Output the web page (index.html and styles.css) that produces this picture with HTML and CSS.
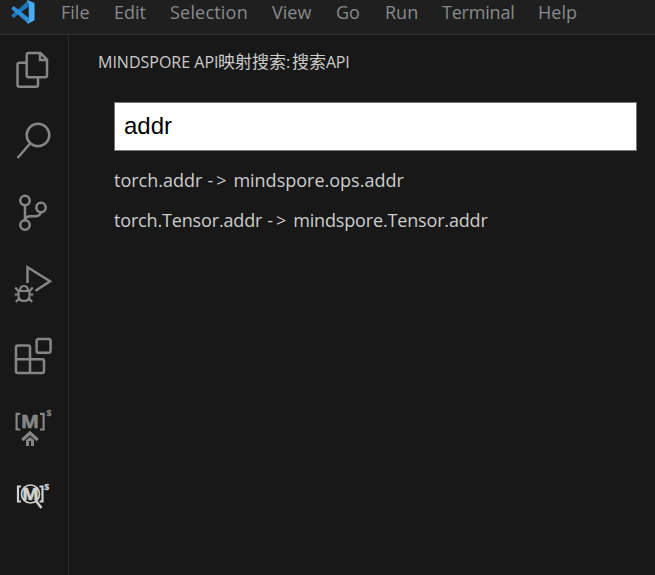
FILE: index.html
```html
<!DOCTYPE html>
<html lang="en">
<head>
<meta charset="utf-8">
<title>MindSpore API</title>
<link rel="stylesheet" href="styles.css">
</head>
<body>
<header class="titlebar">
  <svg class="logo" viewBox="0 0 24 26">
    <path fill="#1b75b8" d="M0 16.8 2.2 18.7 18 6.8V0L.2 15.7Z"/>
    <path fill="#2b8fd6" d="M0 8.2 2.2 6.3 18 18.5V25L.2 9.6Z"/>
    <path fill="#4bacf2" d="M17 .2 24 3.2V21L17.5 24.5 15.8 23.6 18 22V3L15.8 1.2Z"/>
  </svg>
  <nav class="menu">
    <span class="menu-item file">File</span>
    <span class="menu-item edit">Edit</span>
    <span class="menu-item selection">Selection</span>
    <span class="menu-item view">View</span>
    <span class="menu-item go">Go</span>
    <span class="menu-item run">Run</span>
    <span class="menu-item terminal">Terminal</span>
    <span class="menu-item help">Help</span>
  </nav>
</header>
<div class="workbench">
  <aside class="activitybar">
    <svg class="icon" viewBox="0 0 72 72"><path d="M26 26.7H19.5Q17.5 26.7 17.5 28.7V48.7Q17.5 50.7 19.5 50.7H36Q38 50.7 38 48.7V42M28.7 17H40.5L47 23.5V39.3Q47 41.3 45 41.3H28.7Q26.7 41.3 26.7 39.3V19Q26.7 17 28.7 17ZM40 17.5V24H46.5"/></svg>
    <svg class="icon" viewBox="0 0 72 72"><circle cx="38" cy="27" r="11.3"/><path d="M30.3 35.2 17.5 50"/></svg>
    <svg class="icon" viewBox="0 0 72 72"><circle cx="25" cy="20.5" r="4.7"/><circle cx="41" cy="27.5" r="4.7"/><circle cx="25" cy="45" r="4.7"/><path d="M25 25.2V40.3M41 32.2C40 35.5 38 36.3 35 36.3H30.5C27 36.3 25.5 37.5 25 40.3"/></svg>
    <svg class="icon" viewBox="0 0 72 72"><path d="M27.5 31V15.2L50 29.3 35.5 38.8"/><path class="fine" d="M18.5 39H29.5V43.5Q29.5 49 24 49T18.5 43.5ZM20 39Q20 34 24 34T28 39M18.5 39 15.2 35.5M29.5 39 32.8 35.5M18.5 42.5H14.7M29.5 42.5H33.3M19.5 46 15.7 50M28.5 46 32.3 50"/></svg>
    <svg class="icon" viewBox="0 0 72 72"><rect x="36.6" y="15" width="14" height="13.8" rx="2"/><path d="M18 21.5H28Q30 21.5 30 23.5V35.2H42Q44 35.2 44 37.2V47Q44 49 42 49H18Q16 49 16 47V23.5Q16 21.5 18 21.5ZM16 35.2H30V49"/></svg>
    <svg class="icon" viewBox="0 0 72 72"><path class="bracket" d="M20.2 17.8H16.6V33.5H20.2M40 17.8H43.6V33.5H40"/><text class="letter" x="21" y="32" textLength="18" lengthAdjust="spacingAndGlyphs">M</text><text class="sup" x="46.5" y="20">s</text><path class="roof" d="M22.3 44 30 37 37.7 44"/><path class="solid" d="M26 44 30 41 34 44V50H31V45H29V50H26Z"/></svg>
    <svg class="icon active" viewBox="0 0 72 72"><path class="bracket" d="M21 18.5H18V33.5H21M39.5 18.5H42.5V33.5H39.5"/><circle class="lens" cx="30.5" cy="26" r="9"/><text class="letter small" x="22.2" y="31.7" textLength="16.5" lengthAdjust="spacingAndGlyphs">M</text><text class="sup" x="44.3" y="22">s</text><path d="M36 33 41.5 40"/></svg>
  </aside>
  <main class="panel">
    <h1 class="panel-title"><span class="title-name">MINDSPORE API</span><span class="title-cjk">映射搜索</span><span class="title-colon">:</span><span class="title-cjk">搜索</span><span class="title-end">API</span></h1>
    <input class="search" type="text" value="addr">
    <ul class="results">
      <li class="result"><span>torch.addr</span><span class="arrow">-&gt;</span><span>mindspore.ops.addr</span></li>
      <li class="result tight"><span>torch.Tensor.addr</span><span class="arrow">-&gt;</span><span>mindspore.Tensor.addr</span></li>
    </ul>
  </main>
</div>
</body>
</html>
```
FILE: styles.css
```css
* { box-sizing: border-box; }
body {
  margin: 0;
  height: 575px;
  overflow: hidden;
  display: flex;
  flex-direction: column;
  background: #181818;
  color: #ccc;
  font-family: "Open Sans", "Noto Sans CJK SC", sans-serif;
}
.titlebar {
  display: flex;
  flex: none;
  height: 35px;
  padding-left: 11px;
  background: #1f1f1f;
  border-bottom: 1px solid #303030;
}
.logo { width: 24px; height: 25px; }
.menu {
  display: flex;
  gap: 24px;
  margin-left: 26px;
  font-size: 18px;
  line-height: 25px;
  color: #888a8c;
}
.menu-item { white-space: nowrap; }
.file { width: 29px; }
.edit { width: 32px; }
.selection { width: 78px; letter-spacing: 0.2px; }
.view { width: 40px; }
.go { width: 25px; }
.run { width: 33px; }
.terminal { width: 72px; letter-spacing: -0.2px; }
.help { width: 40px; }
.workbench { display: flex; flex: 1; min-height: 0; }
.activitybar {
  display: flex;
  flex-direction: column;
  flex: none;
  width: 69px;
  padding-top: 1px;
  border-right: 1px solid #2b2b2b;
}
.icon {
  flex: none;
  width: 72px;
  height: 72px;
  fill: none;
  stroke: #868686;
  stroke-width: 2.5;
  color: #868686;
}
.icon.active { stroke: #d0d0d0; color: #d0d0d0; }
.fine { stroke-width: 2.2; }
.bracket { stroke-width: 2.2; }
.lens { stroke-width: 1.7; }
.roof { stroke-width: 3.2; }
.solid { fill: currentColor; stroke: none; }
.letter, .sup {
  fill: currentColor;
  font-family: "Open Sans", sans-serif;
  font-weight: 700;
}
.letter { font-size: 18px; stroke: currentColor; stroke-width: 0.6; }
.small { font-size: 16px; }
.sup { font-size: 10px; stroke: currentColor; stroke-width: 0.3; }
.panel { flex: 1; padding: 16px 18px 0 29px; }
.panel-title {
  display: flex;
  margin: 0;
  height: 22px;
  font-size: 16px;
  line-height: 22px;
  font-weight: 400;
  white-space: nowrap;
}
.title-name { width: 120px; }
.title-cjk { font-size: 17px; }
.title-colon { width: 6px; }
.title-end { letter-spacing: -0.3px; }
.search {
  display: block;
  width: 523px;
  height: 49px;
  margin: 29px 0 0 16px;
  padding: 0 9px 2px;
  border: 1px solid #767676;
  background: #fff;
  color: #000;
  font: 24px "Liberation Sans", sans-serif;
}
.results {
  margin: 9px 0 0 16px;
  padding: 0;
  list-style: none;
  font-size: 18px;
}
.result {
  display: flex;
  height: 40px;
  line-height: 40px;
  white-space: nowrap;
}
.tight { letter-spacing: -0.16px; }
.arrow {
  width: 21px;
  margin: 0 5px;
  letter-spacing: 3px;
}
```
